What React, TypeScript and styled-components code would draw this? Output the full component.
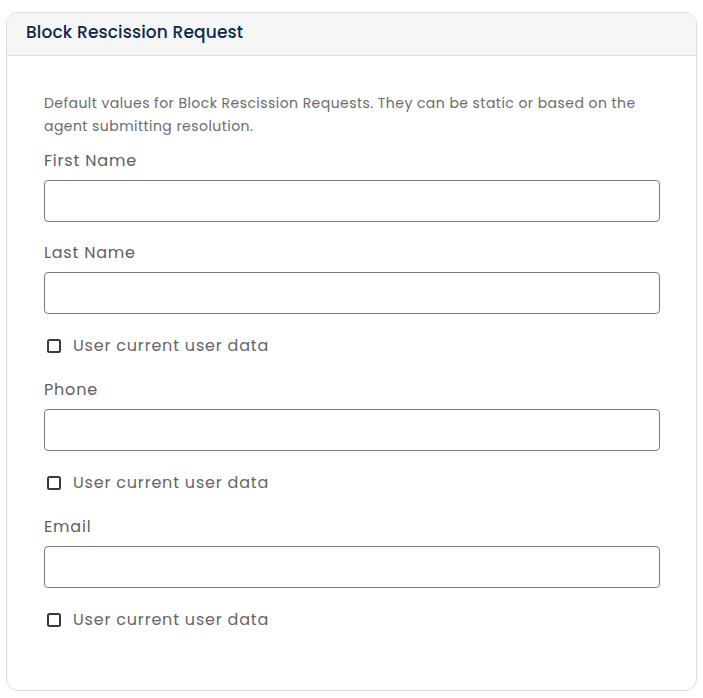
import React from "react";
import styled, { createGlobalStyle } from "styled-components";

const Global = createGlobalStyle`
  html, body { margin: 0; padding: 0; background: #ffffff; }
  body { font-family: "Poppins", "Inter", "Noto Sans", sans-serif; }
  * { box-sizing: border-box; }
`;

const Page = styled.div`
  padding: 12px 6px 9px 6px;
`;

const Card = styled.section`
  border: 1px solid #dcdcdc;
  border-radius: 12px;
  overflow: hidden;
  background: #ffffff;
`;

const Header = styled.header`
  height: 43px;
  display: flex;
  align-items: center;
  padding: 0 19px 4px 19px;
  background: #f6f6f6;
  border-bottom: 1px solid #e1e1e1;
`;

const Title = styled.h2`
  margin: 0;
  font-size: 17px;
  line-height: 24px;
  font-weight: 500;
  color: #0c2a4b;
  letter-spacing: 0.15px;
`;

const Body = styled.div`
  padding: 36px 36px 57px 37px;
`;

const Description = styled.p`
  margin: 0 0 11px 0;
  font-size: 14px;
  line-height: 23px;
  color: #6b6b6b;
  letter-spacing: 0.45px;
`;

const Form = styled.div`
  display: flex;
  flex-direction: column;
  gap: 19px;
`;

const Field = styled.div`
  display: flex;
  flex-direction: column;
  gap: 7px;
`;

const Label = styled.label`
  font-size: 16px;
  line-height: 24px;
  color: #5e5e5e;
  letter-spacing: 0.8px;
`;

const Input = styled.input`
  height: 42px;
  width: 100%;
  border: 1px solid #7a7a7a;
  border-radius: 4px;
  padding: 0 12px;
  font-size: 16px;
  font-family: inherit;
  color: #333;
  background: #fff;
  outline: none;
`;

const CheckRow = styled.label`
  display: flex;
  align-items: center;
  gap: 12px;
  margin: 1px 0;
  padding-left: 3px;
  font-size: 16px;
  line-height: 24px;
  color: #666666;
  letter-spacing: 0.8px;
`;

const Box = styled.span`
  width: 14px;
  height: 14px;
  border: 2px solid #3a3a3a;
  border-radius: 2.5px;
  flex: none;
`;

const fields = [
  { label: "First Name", check: false },
  { label: "Last Name", check: true },
  { label: "Phone", check: true },
  { label: "Email", check: true },
];

export default function App() {
  return (
    <>
      <Global />
      <Page>
        <Card>
          <Header>
            <Title>Block Rescission Request</Title>
          </Header>
          <Body>
            <Description>
              Default values for Block Rescission Requests. They can be static or based on the agent submitting resolution.
            </Description>
            <Form>
              {fields.map((f) => (
                <React.Fragment key={f.label}>
                  <Field>
                    <Label>{f.label}</Label>
                    <Input type="text" />
                  </Field>
                  {f.check && (
                    <CheckRow>
                      <Box />
                      User current user data
                    </CheckRow>
                  )}
                </React.Fragment>
              ))}
            </Form>
          </Body>
        </Card>
      </Page>
    </>
  );
}
